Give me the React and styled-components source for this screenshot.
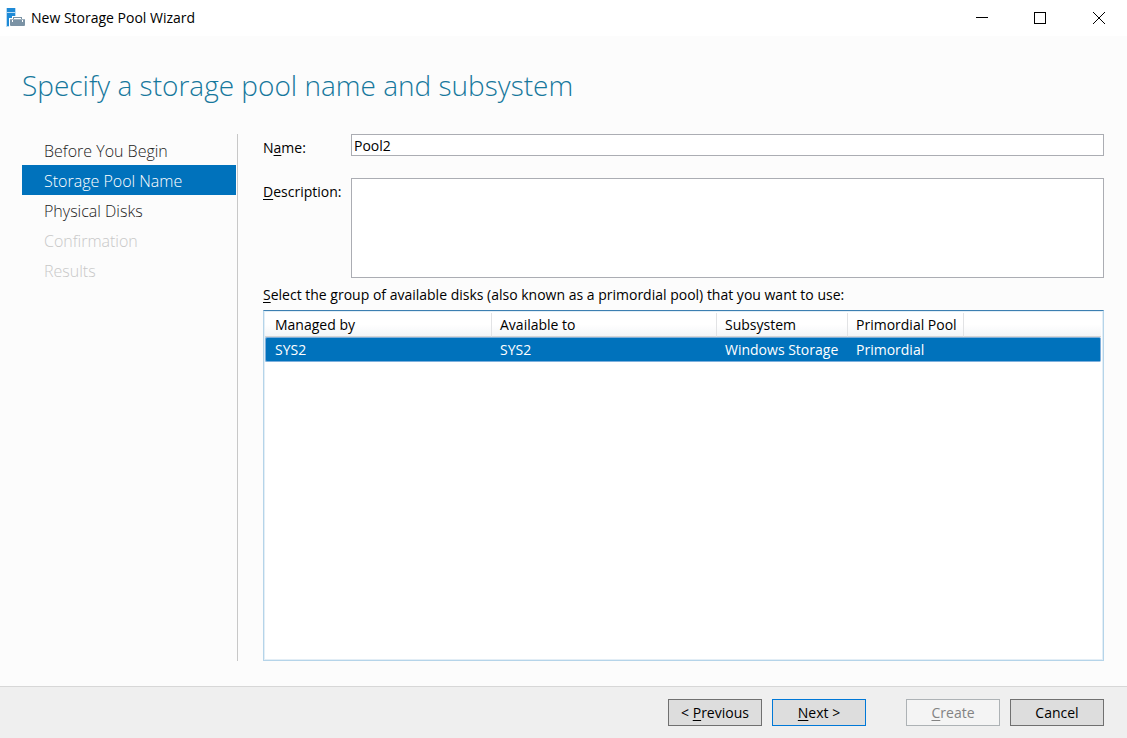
import React, { useState } from 'react';
import styled, { createGlobalStyle, css } from 'styled-components';

const GlobalStyle = createGlobalStyle`
  * {
    box-sizing: border-box;
  }

  body {
    margin: 0;
    background-color: #fcfcfc;
    color: #000;
    font-family: 'Open Sans', 'Noto Sans', sans-serif;
    font-size: 14px;
    line-height: 20px;
  }

  button,
  input,
  textarea {
    font: inherit;
    color: inherit;
  }

  u {
    text-decoration-skip-ink: none;
    text-underline-offset: 2px;
  }
`;

const Window = styled.div`
  display: flex;
  flex-direction: column;
  min-height: 100vh;
`;

const TitleBar = styled.header`
  display: flex;
  align-items: center;
  height: 36px;
  padding-left: 6px;
  background-color: #fff;
`;

const WindowTitle = styled.span`
  flex: 1;
  padding-left: 5px;
`;

const WindowButton = styled.button`
  display: flex;
  align-items: center;
  justify-content: center;
  width: 58px;
  height: 34px;
  padding: 0;
  border: 0;
  background: none;
`;

const Heading = styled.h1`
  margin: 0;
  padding: 29px 22px;
  color: #16789c;
  font-size: 28px;
  font-weight: 300;
  line-height: 40px;
`;

const Body = styled.div`
  display: flex;
  flex: 1;
  padding: 0 23px 25px 22px;
`;

const Steps = styled.nav`
  flex: none;
  width: 216px;
  padding: 1px 1px 0 0;
  border-right: 1px solid #c8c8c8;
`;

const Step = styled.a`
  display: block;
  height: 30px;
  padding-left: 22px;
  color: #222;
  font-size: 16px;
  font-weight: 300;
  line-height: 32px;
  text-decoration: none;

  ${props =>
    props.$active &&
    css`
      background-color: #0072bc;
      color: #fff;
    `}

  ${props =>
    props.$disabled &&
    css`
      color: #c8c8c8;
    `}
`;

const Content = styled.main`
  display: flex;
  flex: 1;
  flex-direction: column;
  min-width: 0;
  padding-left: 25px;
`;

const Fields = styled.div`
  display: grid;
  grid-template-columns: 88px 1fr;
  row-gap: 20px;
`;

const Label = styled.label`
  padding-top: 4px;
  white-space: nowrap;
`;

const Input = styled.input`
  width: 100%;
  height: 22px;
  padding: 0 2px;
  border: 1px solid #abadb3;
  border-radius: 0;
  background-color: #fff;
  outline: 0;
`;

const TextArea = styled.textarea`
  display: block;
  width: 100%;
  height: 100px;
  padding: 0 2px;
  border: 1px solid #abadb3;
  border-radius: 0;
  background-color: #fff;
  outline: 0;
  resize: none;
`;

const GroupLabel = styled.div`
  padding: 7px 0 5px;
`;

const ListBox = styled.div`
  flex: 1;
  padding: 2px 2px 0 1px;
  border: 1px solid #b5d4e9;
  border-top-color: #3c7fb1;
  background-color: #fff;
  box-shadow: inset 0 0 0 1px #e3eef6;
`;

const Table = styled.table`
  width: 100%;
  border-collapse: separate;
  border-spacing: 0;
  table-layout: fixed;
  text-align: left;
  white-space: nowrap;
`;

const Col = styled.col`
  width: ${props => props.$width};
`;

const HeaderCell = styled.th`
  height: 24px;
  padding: 0 0 0 ${props => (props.$first ? '10px' : '8px')};
  border-right: ${props => (props.$last ? '0' : '1px solid #e2e3e5')};
  border-bottom: 1px solid #d5d5d5;
  background-image: linear-gradient(#fff 50%, #f4f5f7);
  font-weight: 400;
`;

const Cell = styled.td`
  height: 25px;
  padding: 0 0 0 ${props => (props.$first ? '9px' : '8px')};
  border: 0 solid #7dafdc;
  border-width: 1px 0;
  background-color: #0072bc;
  color: #fff;

  &:first-child {
    border-left-width: 1px;
    border-radius: 2px 0 0 2px;
  }

  &:last-child {
    border-right-width: 1px;
    border-radius: 0 2px 2px 0;
  }
`;

const Footer = styled.footer`
  display: flex;
  justify-content: flex-end;
  gap: 10px;
  padding: 12px 23px;
  border-top: 1px solid #d7d7d7;
  background-color: #efefef;
`;

const Button = styled.button`
  width: 94px;
  height: 27px;
  margin-left: ${props => (props.$separated ? '30px' : '0')};
  padding: 0;
  border: 1px solid ${props => (props.$primary ? '#0078d7' : '#707070')};
  border-radius: 0;
  background-color: #ddd;

  &:disabled {
    border-color: #adb2b5;
    background-color: #f4f4f4;
    color: #838383;
  }
`;

const steps = [
  { name: 'Before You Begin' },
  { name: 'Storage Pool Name', active: true },
  { name: 'Physical Disks' },
  { name: 'Confirmation', disabled: true },
  { name: 'Results', disabled: true }
];

const columns = [
  { name: 'Managed by', width: '227px' },
  { name: 'Available to', width: '225px' },
  { name: 'Subsystem', width: '131px' },
  { name: 'Primordial Pool', width: '116px' },
  { name: '', width: 'auto' }
];

const pools = [['SYS2', 'SYS2', 'Windows Storage', 'Primordial', '']];

const ServerIcon = () => (
  <svg width="20" height="20" viewBox="0 0 20 20" aria-hidden="true">
    <path fill="#b9dcf5" d="M0 0h10v19H0z" />
    <path fill="#1e8ad6" d="M1 0h8v4H1zM1 5h8v13H1z" />
    <path fill="#fff" d="M3 10h3V8h11v2h3v9H3z" />
    <path fill="#7b93a5" d="M7 11V9h9v2h-1v-1H8v1z" />
    <rect x="4" y="11" width="15" height="7" rx="1" fill="#7b93a5" />
    <path fill="#9fb1be" d="M5 11h13v1H5z" />
    <path fill="#fff" d="M6 12h1v2H6zM16 12h1v2h-1z" />
  </svg>
);

const App = () => {
  const [name, setName] = useState('Pool2');
  const [description, setDescription] = useState('');

  return (
    <>
      <GlobalStyle />
      <Window>
        <TitleBar>
          <ServerIcon />
          <WindowTitle>New Storage Pool Wizard</WindowTitle>
          <WindowButton aria-label="Minimize">
            <svg width="12" height="12" shapeRendering="crispEdges">
              <path d="M0 5.5h12" stroke="#000" />
            </svg>
          </WindowButton>
          <WindowButton aria-label="Maximize">
            <svg width="12" height="12" shapeRendering="crispEdges">
              <path d="M.5.5h11v11H.5z" fill="none" stroke="#000" />
            </svg>
          </WindowButton>
          <WindowButton aria-label="Close">
            <svg width="14" height="12">
              <path d="M2 0l12 12M14 0L2 12" stroke="#000" />
            </svg>
          </WindowButton>
        </TitleBar>
        <Heading>Specify a storage pool name and subsystem</Heading>
        <Body>
          <Steps>
            {steps.map(step => (
              <Step
                key={step.name}
                href="#"
                $active={step.active}
                $disabled={step.disabled}
                aria-disabled={step.disabled}
                aria-current={step.active ? 'step' : undefined}
              >
                {step.name}
              </Step>
            ))}
          </Steps>
          <Content>
            <Fields>
              <Label htmlFor="name">
                N<u>a</u>me:
              </Label>
              <Input
                id="name"
                type="text"
                value={name}
                onChange={e => setName(e.target.value)}
              />
              <Label htmlFor="description">
                <u>D</u>escription:
              </Label>
              <TextArea
                id="description"
                value={description}
                onChange={e => setDescription(e.target.value)}
              />
            </Fields>
            <GroupLabel id="pools">
              <u>S</u>elect the group of available disks (also known as a
              primordial pool) that you want to use:
            </GroupLabel>
            <ListBox>
              <Table aria-labelledby="pools">
                <colgroup>
                  {columns.map(column => (
                    <Col key={column.name} $width={column.width} />
                  ))}
                </colgroup>
                <thead>
                  <tr>
                    {columns.map((column, i) => (
                      <HeaderCell
                        key={column.name}
                        $first={i === 0}
                        $last={i === columns.length - 1}
                      >
                        {column.name}
                      </HeaderCell>
                    ))}
                  </tr>
                </thead>
                <tbody>
                  {pools.map(pool => (
                    <tr key={pool[0]} aria-selected="true">
                      {pool.map((value, i) => (
                        <Cell key={columns[i].name} $first={i === 0}>
                          {value}
                        </Cell>
                      ))}
                    </tr>
                  ))}
                </tbody>
              </Table>
            </ListBox>
          </Content>
        </Body>
        <Footer>
          <Button>
            &lt; <u>P</u>revious
          </Button>
          <Button $primary>
            <u>N</u>ext &gt;
          </Button>
          <Button $separated disabled>
            <u>C</u>reate
          </Button>
          <Button>Cancel</Button>
        </Footer>
      </Window>
    </>
  );
};

export default App;
